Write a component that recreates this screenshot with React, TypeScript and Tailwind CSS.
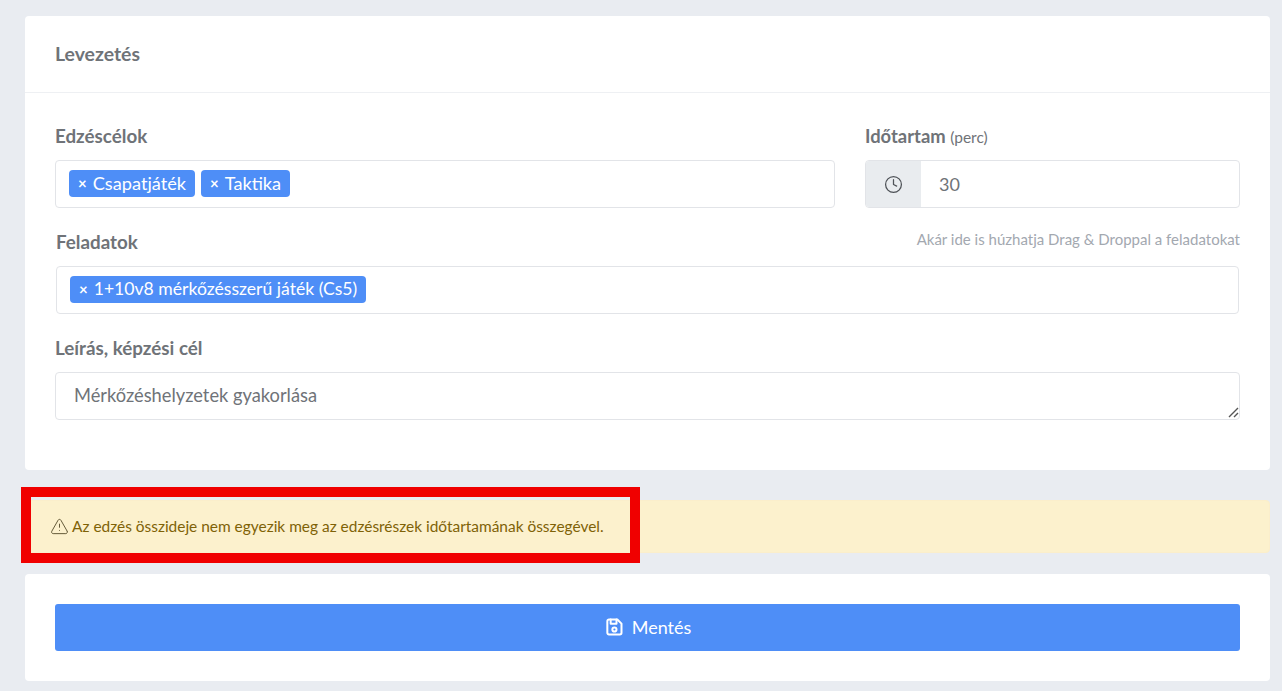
import React from "react";
import { Clock, TriangleAlert } from "lucide-react";

const Tag = ({ label, size }: { label: string; size: string }) => (
  <span className={`flex h-[27px] items-center gap-[6px] rounded-[4px] bg-[#4e8ef7] px-[9px] text-white ${size}`}>
    <span className="text-[15px] font-bold leading-none">×</span>
    {label}
  </span>
);

const Label = ({ children }: { children: React.ReactNode }) => (
  <label className="block h-6 text-[18.8px] font-bold leading-6 text-[#6f7378]">{children}</label>
);

const FloppyIcon = () => (
  <svg width="20" height="20" viewBox="0 0 24 24" fill="none" stroke="currentColor" strokeWidth="2.4" strokeLinecap="round" strokeLinejoin="round">
    <path d="M6 3h10l5 5v11a2 2 0 0 1-2 2H6a2 2 0 0 1-2-2V5a2 2 0 0 1 2-2" />
    <circle cx="12.5" cy="15" r="2.5" />
    <path d="M15 3v5H8V3" />
  </svg>
);

export default function App() {
  return (
    <div className="h-[691px] overflow-hidden bg-[#e9ecf1] pl-[25px] pr-3 pt-4 font-['Lato',sans-serif]">
      <div className="h-[454px] rounded-[4px] bg-white">
        <div className="flex h-[77px] items-center border-b border-[#eef0f3] px-[30px]">
          <h2 className="text-[19.4px] font-bold text-[#6f7378]">Levezetés</h2>
        </div>
        <div className="flex flex-col gap-[22px] px-[30px] pt-[31px]">
          <div className="grid grid-cols-[780px_375px] gap-[30px]">
            <div className="flex flex-col gap-3">
              <Label>Edzéscélok</Label>
              <div className="flex h-12 items-center gap-[6px] rounded-[4px] border border-[#e2e4e8] pb-px pl-[13px]">
                <Tag label="Csapatjáték" size="text-[18.2px]" />
                <Tag label="Taktika" size="text-[18.2px]" />
              </div>
            </div>
            <div className="flex flex-col gap-3">
              <Label>
                <span className="text-[18.4px]">Időtartam</span>{" "}
                <span className="text-[15.5px] font-normal">(perc)</span>
              </Label>
              <div className="flex h-12 overflow-hidden rounded-[4px] border border-[#e2e4e8]">
                <div className="flex w-[55px] items-center justify-center bg-[#e9ecef] pr-px text-[#4f5358]">
                  <Clock size={19} strokeWidth={1.6} />
                </div>
                <input
                  readOnly
                  value="30"
                  className="min-w-0 flex-1 pl-[18px] text-[18px] text-[#6f7378] outline-none"
                />
              </div>
            </div>
          </div>
          <div className="mx-px flex flex-col gap-3">
            <div className="flex items-center justify-between">
              <Label>Feladatok</Label>
              <span className="-mr-px -mt-[5px] text-[15px] text-[#a3a8b0]">
                Akár ide is húzhatja Drag & Droppal a feladatokat
              </span>
            </div>
            <div className="flex h-12 items-center rounded-[4px] border border-[#e2e4e8] pb-px pl-[13px]">
              <Tag label="1+10v8 mérkőzésszerű játék (Cs5)" size="text-[17.6px]" />
            </div>
          </div>
          <div className="flex flex-col gap-3">
            <Label>Leírás, képzési cél</Label>
            <div className="relative">
              <textarea
                readOnly
                value="Mérkőzéshelyzetek gyakorlása"
                className="block h-12 w-full resize-none rounded-[4px] border border-[#e2e4e8] px-[18px] py-[9px] text-[18.3px] leading-[26px] text-[#6f7378] outline-none"
              />
              {/* resize grip */}
              <svg width="11" height="11" viewBox="0 0 11 11" stroke="#555" strokeWidth="1.4" className="pointer-events-none absolute bottom-[2px] right-[1px]">
                <path d="M1 10 10 1M6 10l4-4" />
              </svg>
            </div>
          </div>
        </div>
      </div>

      <div className="relative mt-[30px] flex h-[53px] items-center gap-[3px] rounded-[4px] border border-[#fbeecb] bg-[#fcf1cd] pl-[24px] text-[15.45px] text-[#7f6207]">
        <TriangleAlert size={19} strokeWidth={1.2} className="text-[#5c5230]" />
        Az edzés összideje nem egyezik meg az edzésrészek időtartamának összegével.
        {/* red annotation frame */}
        <div className="absolute -left-[5px] -top-[14px] h-[76px] w-[619px] border-[10px] border-[#f00000]" />
      </div>

      <div className="mt-[21px] h-[107px] rounded-[4px] bg-white p-[30px]">
        <button className="flex h-[47px] w-full items-center justify-center gap-[8px] rounded-[3px] bg-[#4e8ef7] pb-px text-[18px] text-white">
          <FloppyIcon />
          Mentés
        </button>
      </div>
    </div>
  );
}
